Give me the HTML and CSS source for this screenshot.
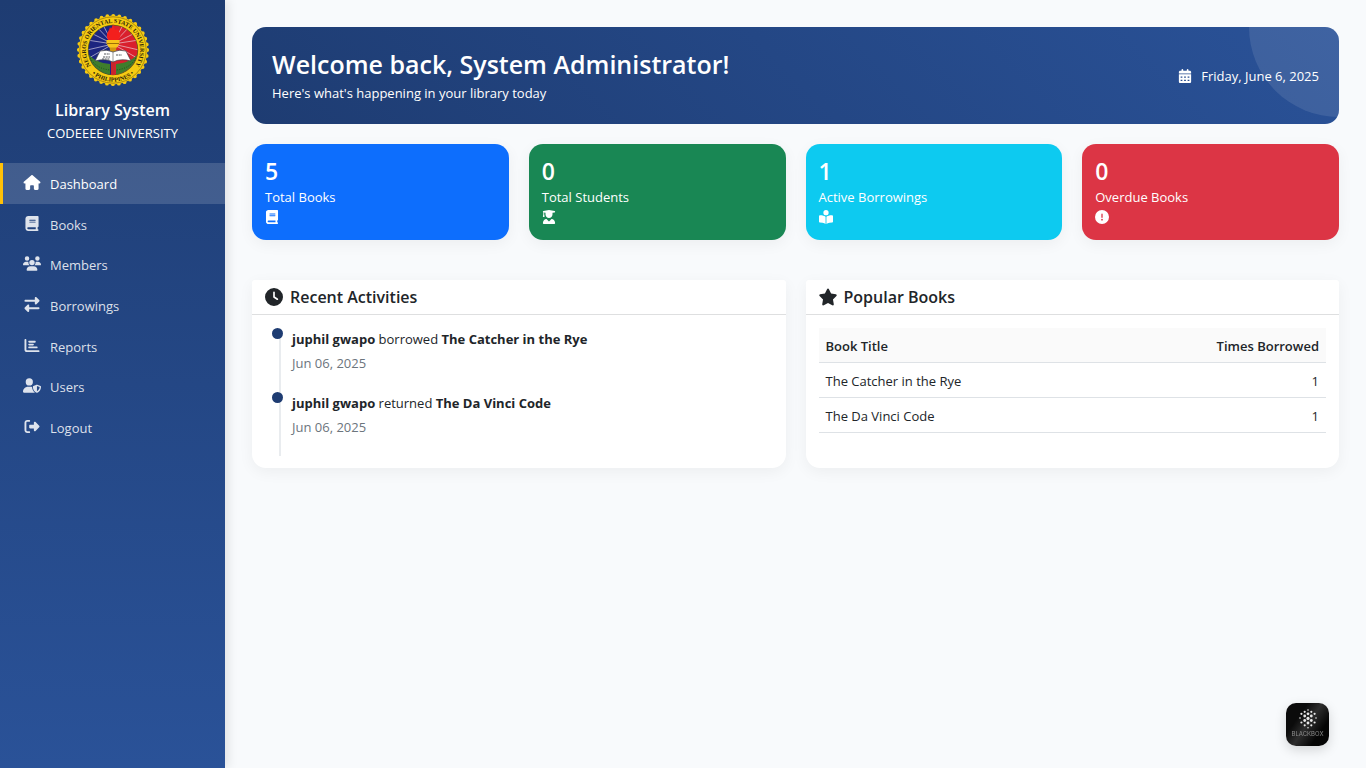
FILE: index.html
```html
<!DOCTYPE html>
<html lang="en">
<head>
<meta charset="utf-8">
<meta name="viewport" content="width=device-width, initial-scale=1">
<title>Library System - Dashboard</title>
<link rel="stylesheet" href="styles.css">
</head>
<body>
<svg class="sprite" aria-hidden="true">
  <symbol id="book" viewBox="0 0 448 512"><path d="M96 0C43 0 0 43 0 96V416c0 53 43 96 96 96H384h32c17.7 0 32-14.3 32-32s-14.3-32-32-32V384c17.7 0 32-14.3 32-32V32c0-17.7-14.3-32-32-32H384 96zm0 384H352v64H96c-17.7 0-32-14.3-32-32s14.3-32 32-32zm32-240c0-8.8 7.2-16 16-16H336c8.8 0 16 7.2 16 16s-7.2 16-16 16H144c-8.8 0-16-7.2-16-16zm16 48H336c8.8 0 16 7.2 16 16s-7.2 16-16 16H144c-8.8 0-16-7.2-16-16s7.2-16 16-16z"/></symbol>
</svg>
<div class="layout">
  <aside class="sidebar">
    <div class="brand">
      <svg class="seal" viewBox="0 0 72 72" role="img" aria-label="Negros Oriental State University Philippines">
        <defs>
          <path id="arcTop" d="M18.3 56.5A27.1 27.1 0 1 1 53.7 56.5"/>
          <path id="arcBottom" d="M11.5 56A31.6 31.6 0 0 0 60.5 56"/>
          <clipPath id="disc"><circle cx="36" cy="36" r="24.5"/></clipPath>
        </defs>
        <circle cx="36" cy="36" r="34.4" fill="#f6cb12"/>
        <circle cx="36" cy="36" r="34.2" fill="none" stroke="#f6cb12" stroke-width="3.8" stroke-dasharray="0 5.97" stroke-linecap="round"/>
        <circle cx="36" cy="36" r="33.2" fill="none" stroke="#8a6f10" stroke-width=".7"/>
        <circle cx="36" cy="36" r="25.2" fill="#5d5a18"/>
        <g clip-path="url(#disc)">
          <path fill="#1c2580" d="M10 10h26v52H10z"/>
          <path fill="#d91f2d" d="M36 10h26v52H36z"/>
          <path stroke="#ece6ee" stroke-width=".6" d="M36 30 12 18M36 30 10 26M36 30 18 11M36 30 25 9M36 30 10 36M36 30 60 18M36 30 62 26M36 30 54 11M36 30 47 9M36 30 62 36M36 30 12 44M36 30 60 44"/>
          <path fill="#3f7d2c" d="M9 36c4 9 13 13 24 14v14H9zM63 36c-4 9-13 13-24 14v14h24z"/>
          <path stroke="#1f5220" stroke-width="1" stroke-dasharray="1 1.5" fill="none" d="M13 44c5 8 11 11 20 12M59 44c-5 8-11 11-20 12"/>
        </g>
        <path fill="#c8262c" d="M34 46h4v15h-4z"/>
        <path fill="#cf9413" d="M32.5 32h7l-1 10h-5z"/>
        <path fill="#f7c51b" d="M29.5 26h13v3.5l-2.5 4h-8l-2.5-4z"/>
        <path fill="#9c6f08" d="M30 29h12v1H30z"/>
        <path fill="#f31f1d" d="M31 26c-3-7 1-8 2-13 1 2 1 3 3-3 2 6 2 7 4 5 5 5 4 8 1 11z"/>
        <path fill="#fff" stroke="#3b3f45" stroke-width=".7" d="M23 37q7-2 13 1 6-3 13-1l5 10q-10-3-18 1-8-4-18-1z"/>
        <path stroke="#55585c" stroke-width="1" stroke-dasharray="2 .7" d="M27 40h6M26 43h7M25 45h8M39 41h6"/>
        <path stroke="#555" stroke-width=".6" d="M36 38v10"/>
        <text class="seal-text"><textPath href="#arcTop" startOffset="50%" text-anchor="middle">NEGROS ORIENTAL STATE UNIVERSITY</textPath></text>
        <text class="seal-text"><textPath href="#arcBottom" startOffset="50%" text-anchor="middle">• PHILIPPINES •</textPath></text>
      </svg>
      <h1 class="brand-name">Library System</h1>
      <p class="brand-sub">CODEEEE UNIVERSITY</p>
    </div>
    <nav class="nav" aria-label="Main">
      <a class="nav-link active" href="#" aria-current="page"><svg class="nav-icon" viewBox="0 0 576 512"><path d="M575.8 255.5c0 18-15 32.1-32 32.1h-32l.7 160.2c0 2.7-.2 5.4-.5 8.1V472c0 22.1-17.9 40-40 40H456c-1.1 0-2.2 0-3.3-.1c-1.4 .1-2.8 .1-4.2 .1H416 392c-22.1 0-40-17.9-40-40V448 384c0-17.7-14.3-32-32-32H256c-17.7 0-32 14.3-32 32v64 24c0 22.1-17.9 40-40 40H160 128.1c-1.5 0-3-.1-4.5-.2c-1.2 .1-2.4 .2-3.6 .2H104c-22.1 0-40-17.9-40-40V360c0-.9 0-1.9 .1-2.8V287.6H32c-18 0-32-14-32-32.1c0-9 3-17 10-24L266.4 8c7-7 15-8 22-8s15 2 21 7L564.8 231.5c8 7 12 15 11 24z"/></svg>Dashboard</a>
      <a class="nav-link" href="#"><svg class="nav-icon"><use href="#book"/></svg>Books</a>
      <a class="nav-link" href="#"><svg class="nav-icon" viewBox="0 0 640 512"><path d="M144 0a80 80 0 1 1 0 160A80 80 0 1 1 144 0zM512 0a80 80 0 1 1 0 160A80 80 0 1 1 512 0zM0 298.7C0 239.8 47.8 192 106.7 192h42.7c15.9 0 31 3.5 44.6 9.7c-1.3 7.2-1.9 14.7-1.9 22.3c0 38.2 16.8 72.5 43.3 96c-.2 0-.4 0-.7 0H21.3C9.6 320 0 310.4 0 298.7zM405.3 320c-.2 0-.4 0-.7 0c26.6-23.5 43.3-57.8 43.3-96c0-7.6-.7-15-1.9-22.3c13.6-6.3 28.7-9.7 44.6-9.7h42.7C592.2 192 640 239.8 640 298.7c0 11.8-9.6 21.3-21.3 21.3H405.3zM224 224a96 96 0 1 1 192 0 96 96 0 1 1 -192 0zM128 485.3C128 411.7 187.7 352 261.3 352H378.7C452.3 352 512 411.7 512 485.3c0 14.7-11.9 26.7-26.7 26.7H154.7c-14.7 0-26.7-11.9-26.7-26.7z"/></svg>Members</a>
      <a class="nav-link" href="#"><svg class="nav-icon" viewBox="0 0 512 512"><path d="M32 96l320 0V32c0-12.9 7.8-24.6 19.8-29.6s25.7-2.2 34.9 6.9l96 96c6 6 9.4 14.1 9.4 22.6s-3.4 16.6-9.4 22.6l-96 96c-9.2 9.2-22.9 11.9-34.9 6.9s-19.8-16.6-19.8-29.6V160L32 160c-17.7 0-32-14.3-32-32s14.3-32 32-32zM480 352c17.7 0 32 14.3 32 32s-14.3 32-32 32H160v64c0 12.9-7.8 24.6-19.8 29.6s-25.7 2.2-34.9-6.9l-96-96c-6-6-9.4-14.1-9.4-22.6s3.4-16.6 9.4-22.6l96-96c9.2-9.2 22.9-11.9 34.9-6.9s19.8 16.6 19.8 29.6l0 64H480z"/></svg>Borrowings</a>
      <a class="nav-link" href="#"><svg class="nav-icon" viewBox="0 0 512 512"><path d="M32 32c17.7 0 32 14.3 32 32V400c0 8.8 7.2 16 16 16H480c17.7 0 32 14.3 32 32s-14.3 32-32 32H80c-44.2 0-80-35.8-80-80V64C0 46.3 14.3 32 32 32zm96 96c0-17.7 14.3-32 32-32l192 0c17.7 0 32 14.3 32 32s-14.3 32-32 32H160c-17.7 0-32-14.3-32-32zm32 64H288c17.7 0 32 14.3 32 32s-14.3 32-32 32H160c-17.7 0-32-14.3-32-32s14.3-32 32-32zm0 96H416c17.7 0 32 14.3 32 32s-14.3 32-32 32H160c-17.7 0-32-14.3-32-32s14.3-32 32-32z"/></svg>Reports</a>
      <a class="nav-link" href="#"><svg class="nav-icon" viewBox="0 0 640 512"><path d="M224 256A128 128 0 1 0 224 0a128 128 0 1 0 0 256zm-45.7 48C79.8 304 0 383.8 0 482.3C0 498.7 13.3 512 29.7 512H418.3c1.8 0 3.5-.2 5.3-.5c-76.3-55.1-99.8-141-103.1-200.2c-16.1-4.8-33.1-7.3-50.7-7.3H178.3zm308.8-78.3l-120 48C358 277.4 352 286.2 352 296c0 63.3 25.9 168.8 134.8 214.2c5.9 2.5 12.6 2.5 18.5 0C614.1 464.8 640 359.3 640 296c0-9.8-6-18.6-15.1-22.3l-120-48c-5.7-2.3-12.1-2.3-17.8 0zM591.4 312c-3.9 50.7-27.2 116.7-95.4 149.7V273.8L591.4 312z"/></svg>Users</a>
      <a class="nav-link" href="#"><svg class="nav-icon" viewBox="0 0 512 512"><path d="M377.9 105.9L500.7 228.7c7.2 7.2 11.3 17.1 11.3 27.3s-4.1 20.1-11.3 27.3L377.9 406.1c-6.4 6.4-15 9.9-24 9.9c-18.7 0-33.9-15.2-33.9-33.9l0-62.1-128 0c-17.7 0-32-14.3-32-32l0-64c0-17.7 14.3-32 32-32l128 0 0-62.1c0-18.7 15.2-33.9 33.9-33.9c9 0 17.6 3.6 24 9.9zM160 96L96 96c-17.7 0-32 14.3-32 32l0 256c0 17.7 14.3 32 32 32l64 0c17.7 0 32 14.3 32 32s-14.3 32-32 32l-64 0c-53 0-96-43-96-96L0 128C0 75 43 32 96 32l64 0c17.7 0 32 14.3 32 32s-14.3 32-32 32z"/></svg>Logout</a>
    </nav>
  </aside>
  <main class="main">
    <header class="banner">
      <div>
        <h2 class="banner-title">Welcome back, System Administrator!</h2>
        <p class="banner-text">Here's what's happening in your library today</p>
      </div>
      <div class="banner-date">
        <svg class="icon" viewBox="0 0 448 512"><path fill-rule="evenodd" d="M128 0c17.7 0 32 14.3 32 32V64H288V32c0-17.7 14.3-32 32-32s32 14.3 32 32V64h48c26.5 0 48 21.5 48 48v48H0V112C0 85.5 21.5 64 48 64H96V32c0-17.7 14.3-32 32-32zM0 192H448V464c0 26.5-21.5 48-48 48H48c-26.5 0-48-21.5-48-48V192zM64 272h64v48H64zM192 272h64v48H192zM320 272h64v48H320zM64 392h64v48H64zM192 392h64v48H192zM320 392h64v48H320z"/></svg>
        <span>Friday, June 6, 2025</span>
      </div>
    </header>
    <section class="stats" aria-label="Statistics">
      <article class="stat stat-blue">
        <h3 class="stat-value">5</h3><p class="stat-label">Total Books</p>
        <svg class="icon" viewBox="0 0 448 512"><use href="#book" width="448" height="512"/></svg>
      </article>
      <article class="stat stat-green">
        <h3 class="stat-value">0</h3><p class="stat-label">Total Students</p>
        <svg class="icon" viewBox="0 0 448 512"><path d="M219.3 .5c3.1-.6 6.3-.6 9.4 0l200 40C439.9 42.7 448 52.6 448 64s-8.1 21.3-19.3 23.5L352 102.9V160c0 70.7-57.3 128-128 128s-128-57.3-128-128V102.9L48 93.3v65.1l15.7 78.4c.9 4.7-.3 9.6-3.3 13.3s-7.6 5.9-12.4 5.9H16c-4.8 0-9.3-2.1-12.4-5.9s-4.3-8.6-3.3-13.3L16 158.4V86.6C6.5 83.3 0 74.3 0 64C0 52.6 8.1 42.7 19.3 40.5l200-40zM111.9 327.7c10.5-3.4 21.8 .4 29.4 8.5l71 75.5c6.3 6.7 17 6.7 23.3 0l71-75.5c7.6-8.1 18.9-11.9 29.4-8.5C401 348.6 448 409.4 448 481.3c0 17-13.8 30.7-30.7 30.7H30.7C13.8 512 0 498.2 0 481.3c0-71.9 47-132.7 111.9-153.6z"/></svg>
      </article>
      <article class="stat stat-cyan">
        <h3 class="stat-value">1</h3><p class="stat-label">Active Borrowings</p>
        <svg class="icon" viewBox="0 0 512 512"><path d="M160 96a96 96 0 1 1 192 0A96 96 0 1 1 160 96zm80 152V512l-48.4-24.2c-20.9-10.4-43.5-17-66.8-19.3l-96-9.6C12.5 457.2 0 443.5 0 427V224c0-17.7 14.3-32 32-32H62.3c63.6 0 125.6 19.6 177.7 56zm32 264V248c52.1-36.4 114.1-56 177.7-56H480c17.7 0 32 14.3 32 32V427c0 16.4-12.5 30.2-28.8 31.8l-96 9.6c-23.2 2.3-45.9 8.9-66.8 19.3L272 512z"/></svg>
      </article>
      <article class="stat stat-red">
        <h3 class="stat-value">0</h3><p class="stat-label">Overdue Books</p>
        <svg class="icon" viewBox="0 0 512 512"><path d="M256 512A256 256 0 1 0 256 0a256 256 0 1 0 0 512zm0-384c13.3 0 24 10.7 24 24V264c0 13.3-10.7 24-24 24s-24-10.7-24-24V152c0-13.3 10.7-24 24-24zM224 352a32 32 0 1 1 64 0 32 32 0 1 1 -64 0z"/></svg>
      </article>
    </section>
    <div class="panels">
      <section class="panel">
        <h2 class="panel-title"><svg class="title-icon" viewBox="0 0 512 512"><path d="M256 0a256 256 0 1 1 0 512A256 256 0 1 1 256 0zM232 120V256c0 8 4 15.5 10.7 20l96 64c11 7.4 25.9 4.4 33.3-6.7s4.4-25.9-6.7-33.3L280 243.2V120c0-13.3-10.7-24-24-24s-24 10.7-24 24z"/></svg>Recent Activities</h2>
        <div class="panel-body">
          <ul class="timeline">
            <li class="event"><p><strong>juphil gwapo</strong> borrowed <strong>The Catcher in the Rye</strong></p><time class="event-date" datetime="2025-06-06">Jun 06, 2025</time></li>
            <li class="event"><p><strong>juphil gwapo</strong> returned <strong>The Da Vinci Code</strong></p><time class="event-date" datetime="2025-06-06">Jun 06, 2025</time></li>
          </ul>
        </div>
      </section>
      <section class="panel">
        <h2 class="panel-title"><svg class="title-icon" viewBox="16 0 544 512"><path d="M316.9 18C311.6 7 300.4 0 288.1 0s-23.4 7-28.8 18L195 150.3 51.4 171.5c-12 1.8-22 10.2-25.7 21.7s-.7 24.2 7.9 32.7L137.8 329 113.2 474.7c-2 12 3 24.2 12.9 31.3s23 8 33.8 2.3l128.3-68.5 128.3 68.5c10.8 5.7 23.9 4.9 33.8-2.3s14.9-19.3 12.9-31.3L438.5 329 542.7 225.9c8.6-8.5 11.7-21.2 7.9-32.7s-13.7-19.9-25.7-21.7L381.2 150.3 316.9 18z"/></svg>Popular Books</h2>
        <div class="panel-body">
          <table class="table">
            <thead><tr><th scope="col">Book Title</th><th scope="col" class="num">Times Borrowed</th></tr></thead>
            <tbody>
              <tr><td>The Catcher in the Rye</td><td class="num">1</td></tr>
              <tr><td>The Da Vinci Code</td><td class="num">1</td></tr>
            </tbody>
          </table>
        </div>
      </section>
    </div>
  </main>
</div>
<button class="assistant" type="button" aria-label="Blackbox">
  <svg class="assistant-dots" viewBox="0 0 20 20">
    <g fill="#e8e8e8"><circle cx="10" cy="1" r=".8"/><circle cx="6.7" cy="2.8" r="1.1"/><circle cx="13.3" cy="2.8" r="1.1"/><circle cx="3.4" cy="4.8" r="1.1"/><circle cx="10" cy="4.8" r="1.4"/><circle cx="16.6" cy="4.8" r="1.1"/><circle cx="6.7" cy="7" r="1.4"/><circle cx="13.3" cy="7" r="1.4"/><circle cx="2" cy="9" r=".8"/><circle cx="10" cy="9.4" r="1.6"/><circle cx="18" cy="9" r=".8"/><circle cx="6.7" cy="11.5" r="1.4"/><circle cx="13.3" cy="11.5" r="1.4"/><circle cx="3.4" cy="13.5" r="1.1"/><circle cx="10" cy="14" r="1.4"/><circle cx="16.6" cy="13.5" r="1.1"/><circle cx="6.7" cy="16.3" r="1.1"/><circle cx="13.3" cy="16.3" r="1.1"/><circle cx="10" cy="18.8" r=".8"/></g>
  </svg>
  <span>BLACKBOX</span>
</button>
</body>
</html>
```
FILE: styles.css
```css
* { box-sizing: border-box; }

body {
  margin: 0;
  background: #f8fafc;
  color: #212529;
  font: 13px/20px "Open Sans", "Noto Sans", sans-serif;
}

h1, h2, h3, p, ul { margin: 0; padding: 0; }
ul { list-style: none; }
svg { fill: currentColor; flex: none; }
.sprite { display: none; }

.layout {
  display: grid;
  grid-template-columns: 225px 1fr;
  min-height: 100vh;
}

/* Sidebar */
.sidebar {
  background: linear-gradient(180deg, #1e3c72, #2a5298);
  color: #fff;
  box-shadow: 3px 0 10px rgba(0, 0, 0, .1);
}

.brand {
  display: flex;
  flex-direction: column;
  align-items: center;
  padding: 14px 14px 17px;
}

.seal { width: 72px; height: 72px; margin-bottom: 14px; overflow: visible; }
.seal-text { font: bold 6px "Liberation Serif", serif; fill: #2b230a; }
.brand-name { font-size: 16px; line-height: 20px; font-weight: 600; }
.brand-sub { line-height: 26px; }

.nav {
  display: grid;
  grid-auto-rows: 1fr;
  min-height: 284px;
}

.nav-link {
  display: flex;
  align-items: center;
  gap: 9px;
  padding: 2px 20px 0;
  border-left: 3px solid transparent;
  color: rgba(255, 255, 255, .85);
  text-decoration: none;
}

.nav-link.active {
  background: rgba(255, 255, 255, .15);
  border-left-color: #ffc107;
  color: #fff;
}

.nav-icon { width: 18px; height: 15px; margin-bottom: 3px; }

/* Main column */
.main { padding: 27px; }

.banner {
  position: relative;
  display: flex;
  align-items: center;
  justify-content: space-between;
  padding: 19px 20px;
  overflow: hidden;
  border-radius: 14px;
  background: linear-gradient(45deg, #1e3c72, #2a5298);
  color: #fff;
}

.banner::before {
  content: "";
  position: absolute;
  top: -90px;
  right: -90px;
  width: 180px;
  height: 180px;
  border-radius: 50%;
  background: rgba(255, 255, 255, .1);
}

.banner-title { font-size: 25px; line-height: 36px; font-weight: 600; }
.banner-text { line-height: 23px; }
.banner-date { position: relative; display: flex; align-items: center; gap: 9px; }
.icon { display: block; width: 14px; height: 14px; }

.stats {
  display: grid;
  grid-template-columns: repeat(4, 1fr);
  gap: 20px;
  margin: 20px 0 40px;
}

.stat {
  padding: 13px 13px 16px;
  border-radius: 14px;
  color: #fff;
  box-shadow: 0 4px 15px rgba(0, 0, 0, .05);
}

.stat-blue { background: #0d6efd; }
.stat-green { background: #198754; }
.stat-cyan { background: #0dcaf0; }
.stat-red { background: #dc3545; }
.stat-value { font-size: 23px; line-height: 28px; font-weight: 600; }
.stat-label { line-height: 24px; margin-bottom: 1px; }

.panels {
  display: grid;
  grid-template-columns: 1fr 1fr;
  gap: 20px;
}

.panel {
  background: #fff;
  border-radius: 3px 3px 14px 14px;
  box-shadow: 0 4px 15px rgba(0, 0, 0, .05);
}

.panel-title {
  display: flex;
  align-items: center;
  gap: 7px;
  padding: 7px 13px;
  border-bottom: 1px solid #dedfe0;
  font-size: 16px;
  line-height: 20px;
  font-weight: 600;
}

.title-icon { width: 18px; height: 18px; }
.panel-body { padding: 13px 13px 12px; }

.timeline { position: relative; padding-left: 27px; }

.timeline::before {
  content: "";
  position: absolute;
  top: 0;
  bottom: 0;
  left: 14px;
  width: 2px;
  background: #e9ecef;
}

.event { position: relative; padding-bottom: 16px; line-height: 24px; }
.event p { line-height: 23px; }

.event::before {
  content: "";
  position: absolute;
  top: 0;
  left: -20px;
  width: 11px;
  height: 11px;
  border-radius: 50%;
  background: #1e3c72;
}

.event strong { font-weight: 700; }
.event-date { display: block; padding-bottom: 1px; color: #6c757d; }

.table { width: 100%; border-collapse: collapse; }

.table th,
.table td {
  padding: 8px 7px 6px;
  border-bottom: 1px solid #dee2e6;
  text-align: left;
  font-weight: 400;
}

.table th { background: #fafafa; font-weight: 600; }
.table .num { text-align: right; }

/* Floating assistant */
.assistant {
  position: fixed;
  right: 37px;
  bottom: 22px;
  display: flex;
  flex-direction: column;
  align-items: center;
  width: 43px;
  height: 43px;
  padding: 6px 0 0;
  border: 0;
  border-radius: 10px;
  background: linear-gradient(125deg, #0b0b0b 30%, #2d2d2d 50%, #050505 75%);
  color: #8a8a8a;
  font: 6px/9px "Inter", sans-serif;
  box-shadow: 0 4px 12px rgba(0, 0, 0, .15);
}

.assistant-dots { width: 22px; height: 20px; }
```
